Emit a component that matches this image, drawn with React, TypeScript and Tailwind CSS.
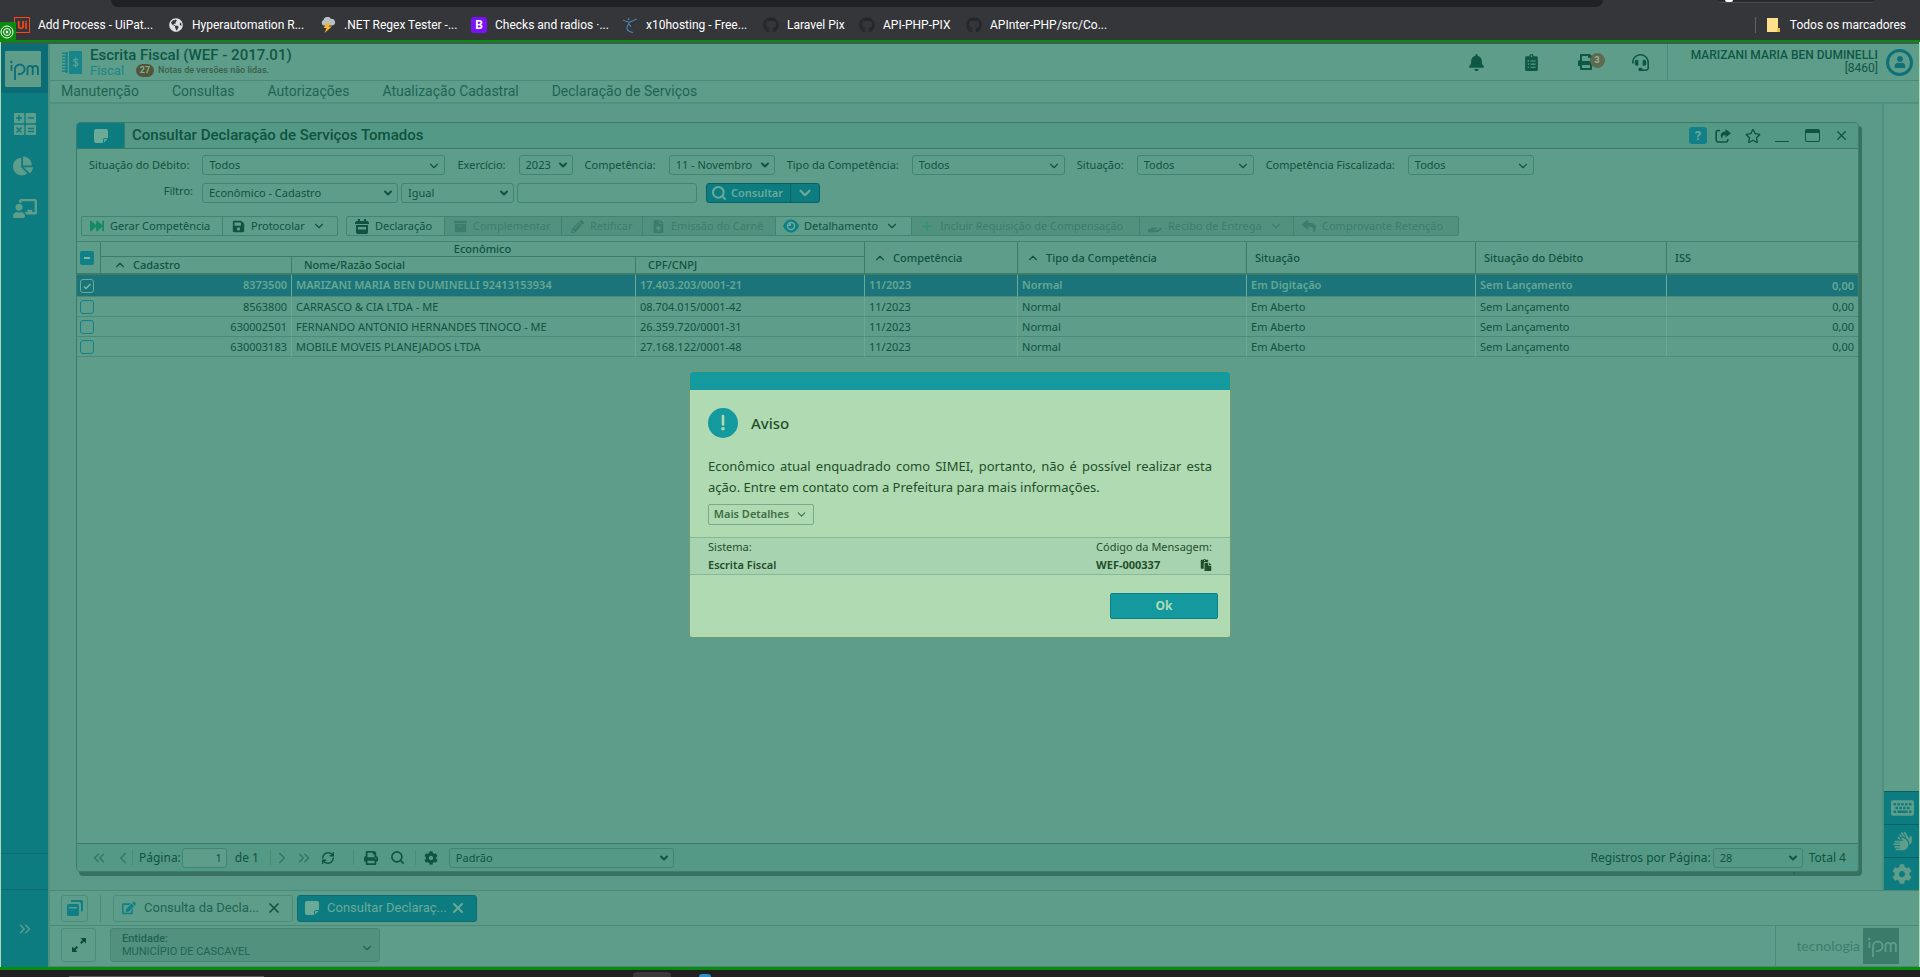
import { useId } from "react";
import type { ReactNode } from "react";
import {
  FaArchive,
  FaBell,
  FaChalkboardTeacher,
  FaChartPie,
  FaClipboardList,
  FaCog,
  FaEdit,
  FaFastForward,
  FaFileUpload,
  FaGithub,
  FaGlobeAmericas,
  FaHandHolding,
  FaHeadset,
  FaKeyboard,
  FaPaste,
  FaPencilAlt,
  FaPlus,
  FaPrint,
  FaRegStar,
  FaReply,
  FaSave,
  FaUser,
} from "react-icons/fa";
import { FaHands } from "react-icons/fa6";
import { ChevronDown, ChevronLeft, ChevronRight, ChevronUp, ChevronsLeft, ChevronsRight, RefreshCw, Search, X } from "lucide-react";

const bookmarks: { label: string; width: string; icon: ReactNode }[] = [
  {
    label: "Add Process - UiPat...",
    width: "w-[154px]",
    icon: (
      <span className="flex size-4 items-center justify-center border border-[#fa4616] font-['Roboto'] text-[11px] leading-none font-bold text-[#fa4616]">
        Ui
      </span>
    ),
  },
  { label: "Hyperautomation R...", width: "w-[152px]", icon: <FaGlobeAmericas className="size-[14px] text-[#dfe1e5]" /> },
  { label: ".NET Regex Tester -...", width: "w-[151px]", icon: <StormIcon /> },
  {
    label: "Checks and radios ·...",
    width: "w-[151px]",
    icon: (
      <span className="flex size-4 items-center justify-center rounded-[3px] bg-[#7a12f5] font-['Roboto'] text-xs leading-none font-bold text-white">
        B
      </span>
    ),
  },
  { label: "x10hosting - Free...", width: "w-[141px]", icon: <RunnerIcon /> },
  { label: "Laravel Pix", width: "w-[96px]", icon: <FaGithub className="size-4 text-[#24282d]" /> },
  { label: "API-PHP-PIX", width: "w-[107px]", icon: <FaGithub className="size-4 text-[#24282d]" /> },
  { label: "APInter-PHP/src/Co...", width: "w-[140px]", icon: <FaGithub className="size-4 text-[#24282d]" /> },
];

const rows = [
  { id: "8373500", name: "MARIZANI MARIA BEN DUMINELLI 92413153934", doc: "17.403.203/0001-21", status: "Em Digitação", selected: true },
  { id: "8563800", name: "CARRASCO & CIA LTDA - ME", doc: "08.704.015/0001-42", status: "Em Aberto", selected: false },
  { id: "630002501", name: "FERNANDO ANTONIO HERNANDES TINOCO - ME", doc: "26.359.720/0001-31", status: "Em Aberto", selected: false },
  { id: "630003183", name: "MOBILE MOVEIS PLANEJADOS LTDA", doc: "27.168.122/0001-48", status: "Em Aberto", selected: false },
];

function StormIcon() {
  return (
    <svg viewBox="0 0 16 16" className="size-4">
      <path d="M3.5 8.5a3 3 0 0 1 0-5.5A4 4 0 0 1 11 2a3.2 3.2 0 0 1 1.500 6.500z" fill="#b9c0c6" />
      <path d="M7 6 3.500 11h3L4.500 16 12 9.500H8.500L11 6z" fill="#f7b52c" />
    </svg>
  );
}

function RunnerIcon() {
  return (
    <svg viewBox="0 0 16 16" className="size-4" fill="none" stroke="#4c7fa6" strokeWidth="1.200">
      <circle cx="6.500" cy="2" r="1" fill="#4c7fa6" stroke="none" />
      <path d="M1 3c2 1 4 2 6 2s5-2 8-3M7 5c0 3-2 3-2 6s3 4 6 4.500M7 7l2 3" />
    </svg>
  );
}

function IpmLogo({ className }: { className: string }) {
  return (
    <svg viewBox="0 0 36 36" className={className} fill="none" stroke="currentColor" strokeWidth="1.800">
      <path d="M6.500 14v6" />
      <circle cx="6.300" cy="11" r="1.200" fill="currentColor" stroke="none" />
      <path d="M10 29V18.300a4.800 4.800 0 1 1 4.800 4.800h-1.800" />
      <path d="M22.500 24v-6.500a2.600 2.600 0 0 1 5.200 0V24M27.700 17.500a2.600 2.600 0 0 1 5.200 0V24" />
    </svg>
  );
}

function CalcIcon() {
  return (
    <svg viewBox="0 0 22 22" className="size-[22px]" fill="#5c9d8b">
      <rect x="0" y="0" width="10.300" height="10.300" rx="1" />
      <rect x="11.700" y="0" width="10.300" height="10.300" rx="1" />
      <rect x="0" y="11.700" width="10.300" height="10.300" rx="1" />
      <rect x="11.700" y="11.700" width="10.300" height="10.300" rx="1" />
      <g stroke="#0d7c80" strokeWidth="1.500">
        <path d="M5 2v6M2 5h6M14 5h6M2.500 14.500l5 5M7.500 14.500l-5 5M14 15.500h6M14 18.500h6" />
      </g>
    </svg>
  );
}

function LedgerIcon() {
  return (
    <svg viewBox="0 0 20 23" className="h-[23px] w-5" fill="#17858a">
      <path d="M3.500 1h2v21h-2zM7 0h13v23H7z" />
      <path d="M0 1.500h6V3H0zM0 4.500h6V6H0zM0 7.500h6V9H0zM0 10.500h6V12H0zM0 13.500h6V15H0zM0 16.500h6V18H0zM0 19.500h6V21H0z" />
      <path d="M16 9c-1-1.300-4.500-1.300-4.500.6s4.500 1.300 4.500 3.500-3.700 2-4.700.6M13.700 6.500v10" fill="none" stroke="#5e9d8a" strokeWidth="1.300" />
    </svg>
  );
}

function NoteIcon() {
  return (
    <svg viewBox="0 0 14 14" className="size-[14px]">
      <path d="M2 0h10a2 2 0 0 1 2 2v7H11a2 2 0 0 0-2 2v3H2a2 2 0 0 1-2-2V2a2 2 0 0 1 2-2z" fill="#6aaa97" />
      <path d="M13.500 10 10 13.500V11a1 1 0 0 1 1-1z" fill="#6aaa97" />
    </svg>
  );
}

function EyeIcon() {
  return (
    <svg viewBox="0 0 16 14" className="h-[14px] w-4">
      <path d="M0 7C2 2.500 5 .5 8 .5S14 2.500 16 7c-2 4.500-5 6.500-8 6.500S2 11.500 0 7z" fill="#0f7f86" />
      <circle cx="8" cy="7" r="4.300" fill="#6aaa97" />
      <circle cx="8" cy="7" r="2.800" fill="#0f7f86" />
      <path d="M8 4.200A2.800 2.800 0 0 0 5.200 7H8z" fill="#6aaa97" />
    </svg>
  );
}

function CalendarIcon() {
  return (
    <svg viewBox="0 0 14 15" className="h-[15px] w-[14px]" fill="currentColor">
      <path d="M3 0h2v2h4V0h2v2h1.500L14 3.500V5H0V3.500L1.500 2H3zM1 6h12v7.500l-1 1.500H2l-1-1.500zm2 2v2.500h8V8z" fillRule="evenodd" />
    </svg>
  );
}

function StackIcon() {
  return (
    <svg viewBox="0 0 16 16" className="size-4" fill="#0f7f86">
      <path d="M4 0h10.500A1.500 1.500 0 0 1 16 1.500V10a1.500 1.500 0 0 1-1.500 1.500H14V4a2 2 0 0 0-2-2H4z" />
      <path d="M1.500 4h9A1.500 1.500 0 0 1 12 5.500v9a1.500 1.500 0 0 1-1.500 1.500h-9A1.500 1.500 0 0 1 0 14.500v-9A1.500 1.500 0 0 1 1.500 4zM2 7v1.500h8V7z" fillRule="evenodd" />
    </svg>
  );
}

function ExpandIcon() {
  return (
    <svg viewBox="0 0 14 14" className="size-[14px]" fill="currentColor">
      <path d="M8.500 0H14v5.500l-2-2-2.500 2.500-1.500-1.500L10.500 2zM5.500 14H0V8.500l2 2 2.500-2.500L6 9.500 3.500 12z" />
    </svg>
  );
}

function ShareIcon() {
  return (
    <svg viewBox="0 0 16 14" className="h-[14px] w-4">
      <path d="M5 1.500H3A1.800 1.800 0 0 0 1.200 3.300v8A1.800 1.800 0 0 0 3 13h8a1.800 1.800 0 0 0 1.800-1.700V10" fill="none" stroke="currentColor" strokeWidth="1.600" />
      <path d="M10.500 0 16 4.300l-5.500 4.200V6C8 6 7 7 7.500 9.800 5 8 4.500 2.800 10.500 2.600z" fill="currentColor" />
    </svg>
  );
}

type FieldProps = { label: string; value: string; width: string; thin?: boolean };

function SelectBox({ id, label, value, width, thin }: FieldProps & { id?: string }) {
  return (
    <span className={`relative block ${width}`}>
      <select
        id={id}
        aria-label={id ? undefined : label}
        className="block h-5 w-full appearance-none rounded-[3px] border border-[#3f8571] bg-transparent pl-1.5 text-[11px] leading-[18px] text-[#0f5340]"
      >
        <option>{value}</option>
      </select>
      <ChevronDown
        strokeWidth={thin ? 2 : 4}
        className={`pointer-events-none absolute top-1 right-1 text-[#0f5340] ${thin ? "size-[14px]" : "size-3"}`}
      />
    </span>
  );
}

function Field({ label, value, width, thin }: FieldProps) {
  const id = useId();
  return (
    <div className="flex items-center gap-[13px]">
      <label htmlFor={id} className="whitespace-nowrap">
        {label}
      </label>
      <SelectBox id={id} label={label} value={value} width={width} thin={thin} />
    </div>
  );
}

function ToolButton({ icon, children, width, disabled, menu, last }: { icon: ReactNode; children: ReactNode; width: string; disabled?: boolean; menu?: boolean; last?: boolean }) {
  return (
    <button
      disabled={disabled}
      className={`flex h-[18px] items-center gap-[5px] whitespace-nowrap pl-[7px] ${width} ${last ? "" : "border-r border-[#3f8571]"} ${
        disabled ? "bg-[#53917f] text-[#3b7d6a]" : "text-[#0f5340]"
      }`}
    >
      <span className="flex w-4 justify-center">{icon}</span>
      {children}
      {menu && <ChevronDown className="ml-0.5 size-[14px]" />}
    </button>
  );
}

function TopBar() {
  return (
    <div className="relative flex h-10 flex-col bg-[#35363a]">
      <div className="flex h-[7px] justify-between pr-[45px] pl-[111px]">
        <div className="h-full w-[1492px] rounded-b-xl bg-[#202124]" />
        <div className="h-[3px] w-[158px] rounded-b-md border-b border-[#4a4b4f] bg-[#292a2d] pl-2">
          <div className="h-0.5 w-2 rounded-b bg-white" />
        </div>
      </div>
      <nav className="flex h-[33px] items-center pt-[3px] pl-[14px] font-['Roboto',sans-serif] text-xs text-white">
        {bookmarks.map((b) => (
          <a key={b.label} href="#" className={`flex items-center gap-2 whitespace-nowrap ${b.width}`}>
            <span className="flex w-4 justify-center">{b.icon}</span>
            {b.label}
          </a>
        ))}
        <a href="#" className="ml-auto flex h-4 items-center gap-2.5 border-l border-[#606165] pr-[14px] pl-[11px] whitespace-nowrap">
          <svg viewBox="0 0 13 14" className="h-[14px] w-[13px]">
            <path d="M0 0h11v10h2v4H0z" fill="#ffe08a" />
            <path d="M10 10h3v4h-3z" fill="#e8bf4a" />
          </svg>
          Todos os marcadores
        </a>
      </nav>
      <div className="absolute top-[22px] left-0 flex h-5 w-4 items-center bg-[#0a8a0f]">
        <svg viewBox="0 0 14 14" className="size-[14px]" fill="none" stroke="white">
          <circle cx="7" cy="7" r="6" />
          <circle cx="7" cy="7" r="3.500" />
          <circle cx="7" cy="7" r="1" fill="white" />
        </svg>
      </div>
    </div>
  );
}

function Sidebar() {
  return (
    <aside className="ml-px flex w-[49px] shrink-0 flex-col border-r-2 border-[#4f9180] bg-[#0d7c80]">
      <div className="flex h-[49px] items-center justify-center bg-[#0b6c76] pr-1">
        <div className="size-9 rounded-[1px] bg-[#5e9d8a] text-[#0b6c76]">
          <IpmLogo className="size-9" />
        </div>
      </div>
      <nav className="flex flex-col items-center pt-5 text-[#5c9d8b]">
        <a href="#" aria-label="Calculadora" className="flex h-[43px] items-start">
          <CalcIcon />
        </a>
        <a href="#" aria-label="Relatórios" className="flex h-[42px] items-start pr-1">
          <FaChartPie className="size-5" />
        </a>
        <a href="#" aria-label="Treinamento" className="flex items-start">
          <FaChalkboardTeacher className="h-[21px] w-6" />
        </a>
      </nav>
      <div className="mt-auto h-[37px] border-y border-[#0b6c76]" />
      <button aria-label="Expandir menu" className="flex h-[77px] items-center justify-center text-[#5c9d8b]">
        <ChevronsRight className="size-[18px]" />
      </button>
    </aside>
  );
}

function Header() {
  return (
    <header className="font-['Roboto',sans-serif]">
      <div className="flex h-[37px] items-stretch border-b border-[#488b79]">
        <div className="flex items-center gap-2 pl-3">
          <LedgerIcon />
          <div>
            <h1 className="text-[15px] leading-[17px] font-medium text-[#0f5745]">Escrita Fiscal (WEF - 2017.01)</h1>
            <div className="flex items-center leading-[13px]">
              <span className="w-[46px] text-[13px] text-[#1b8788]">Fiscal</span>
              <span className="flex h-[13px] w-[18px] items-center justify-center rounded-full bg-[#53543a] text-[9px] font-bold text-[#7fae93]">27</span>
              <span className="pl-1 text-[9px] font-medium text-[#39604a]">Notas de versões não lidas.</span>
            </div>
          </div>
        </div>
        <div className="ml-auto flex items-center gap-[38px] pr-[18px] text-[#0f5745]">
          <button aria-label="Notificações"><FaBell className="size-[17px]" /></button>
          <button aria-label="Tarefas"><FaClipboardList className="size-[17px]" /></button>
          <button aria-label="Impressões" className="relative">
            <FaPrint className="size-4" />
            <span className="absolute -top-px left-3 flex size-[15px] items-center justify-center rounded-full bg-[#5e6a4f] text-[9px] font-bold text-[#8cb89b]">3</span>
          </button>
          <button aria-label="Suporte"><FaHeadset className="size-[17px]" /></button>
        </div>
        <div className="flex items-center gap-2 border-l border-[#488b79] pr-[7px] pl-[23px] text-right">
          <div className="text-xs leading-[13px] text-[#0f5745]">
            <div className="font-medium">MARIZANI MARIA BEN DUMINELLI</div>
            <div>[8460]</div>
          </div>
          <div className="flex size-[27px] items-center justify-center rounded-full border-[3px] border-[#0f7078] text-[#0f7078]">
            <FaUser className="size-3" />
          </div>
        </div>
      </div>
      <nav className="flex h-[23px] items-center gap-[33px] border-b-2 border-[#4f9180] pb-px pl-[11px] text-sm leading-none text-[#1d6552]">
        <a href="#">Manutenção</a>
        <a href="#">Consultas</a>
        <a href="#">Autorizações</a>
        <a href="#">Atualização Cadastral</a>
        <a href="#">Declaração de Serviços</a>
      </nav>
    </header>
  );
}

function Filters() {
  return (
    <div className="flex flex-col gap-2 pt-1.5 text-[11px] text-[#0f5340]">
      <div className="flex gap-3 pl-3">
        <Field label="Situação do Débito:" value="Todos" width="w-[243px]" thin />
        <Field label="Exercício:" value="2023" width="w-[54px]" />
        <Field label="Competência:" value="11 - Novembro" width="w-[106px]" />
        <Field label="Tipo da Competência:" value="Todos" width="w-[153px]" thin />
        <Field label="Situação:" value="Todos" width="w-[117px]" thin />
        <Field label="Competência Fiscalizada:" value="Todos" width="w-[126px]" thin />
      </div>
      <div className="flex items-start gap-[3px]">
        <label htmlFor="filtro" className="mr-1.5 w-[116px] text-right leading-4">
          Filtro:
        </label>
        <SelectBox id="filtro" label="Filtro" value="Econômico - Cadastro" width="w-[196px]" />
        <SelectBox label="Operador" value="Igual" width="w-[113px]" />
        <input aria-label="Valor do filtro" className="h-5 w-[180px] rounded-[3px] border border-[#3f8571] bg-transparent px-1" />
        <div className="ml-1.5 flex h-5 rounded-[3px] border border-[#086068] bg-[#0d7c80] font-semibold text-[#6aaa97]">
          <button className="flex w-[84px] items-center gap-1 border-r border-[#086068] pl-1">
            <Search strokeWidth={3} className="size-4" />
            Consultar
          </button>
          <button aria-label="Mais opções de consulta" className="flex w-7 items-center justify-center">
            <ChevronDown strokeWidth={3} className="size-[18px]" />
          </button>
        </div>
      </div>
    </div>
  );
}

function Toolbar() {
  return (
    <div className="flex gap-2 px-1 pt-[13px] pb-[5px] text-[11px]">
      <div className="flex rounded-[2px] border border-[#3f8571]">
        <ToolButton width="w-[141px]" icon={<FaFastForward className="size-[14px] text-[#128a63]" />}>Gerar Competência</ToolButton>
        <ToolButton width="w-[114px]" menu last icon={<FaSave className="size-[13px]" />}>Protocolar</ToolButton>
      </div>
      <div className="flex rounded-[2px] border border-[#3f8571]">
        <ToolButton width="w-[98px]" icon={<CalendarIcon />}>Declaração</ToolButton>
        <ToolButton width="w-[117px]" disabled icon={<FaArchive className="size-[13px]" />}>Complementar</ToolButton>
        <ToolButton width="w-[81px]" disabled icon={<FaPencilAlt className="size-[13px]" />}>Retificar</ToolButton>
        <ToolButton width="w-[133px]" disabled icon={<FaFileUpload className="size-[13px]" />}>Emissão do Carnê</ToolButton>
        <ToolButton width="w-[136px]" menu icon={<EyeIcon />}>Detalhamento</ToolButton>
        <ToolButton width="w-[228px]" disabled icon={<FaPlus className="size-3 text-[#3a9474]" />}>Incluir Requisição de Compensação</ToolButton>
        <ToolButton width="w-[154px]" disabled menu icon={<FaHandHolding className="size-[14px]" />}>Recibo de Entrega</ToolButton>
        <ToolButton width="w-[164px]" disabled last icon={<FaReply className="size-[14px]" />}>Comprovante Retenção</ToolButton>
      </div>
    </div>
  );
}

const boxClass =
  "block size-[14px] appearance-none rounded-[3px] border border-[#128088] checked:border-[#6aaa97]";

function Grid() {
  const head = "border-r border-b-2 border-[#3b7d69] text-left font-medium";
  return (
    <table className="w-full table-fixed border-separate border-spacing-0 border-t border-[#3f8571] text-[11px] text-[#0f5340]">
      <colgroup>
        <col className="w-6" />
        <col className="w-[191px]" />
        <col className="w-[344px]" />
        <col className="w-[229px]" />
        <col className="w-[153px]" />
        <col className="w-[229px]" />
        <col className="w-[229px]" />
        <col className="w-[191px]" />
        <col />
      </colgroup>
      <thead>
        <tr className="h-[15px] leading-[14px]">
          <th rowSpan={2} className={`${head} pl-[3px]`}>
            <button aria-label="Desmarcar todos" className="flex size-[14px] items-center justify-center rounded-[2px] bg-[#128088]">
              <span className="h-0.5 w-1.5 bg-[#7fb8a0]" />
            </button>
          </th>
          <th colSpan={3} className="border-r border-b border-[#3b7d69] text-center font-medium">Econômico</th>
          <th rowSpan={2} className={`${head} pl-2`}>
            <span className="flex items-center gap-1.5"><ChevronUp className="size-[14px]" />Competência</span>
          </th>
          <th rowSpan={2} className={`${head} pl-2`}>
            <span className="flex items-center gap-1.5"><ChevronUp className="size-[14px]" />Tipo da Competência</span>
          </th>
          <th rowSpan={2} className={`${head} pl-2`}>Situação</th>
          <th rowSpan={2} className={`${head} pl-2`}>Situação do Débito</th>
          <th rowSpan={2} className="border-b-2 border-[#3b7d69] pl-2 text-left font-medium">ISS</th>
        </tr>
        <tr className="h-[18px] leading-4">
          <th className={`${head} pl-3`}>
            <span className="flex items-center gap-1.5"><ChevronUp className="size-[14px]" />Cadastro</span>
          </th>
          <th className={`${head} pl-3`}>Nome/Razão Social</th>
          <th className={`${head} pl-3`}>CPF/CNPJ</th>
        </tr>
      </thead>
      <tbody>
        {rows.map((r) => {
          const cell = r.selected ? "border-b border-r border-r-[#6aaa97] border-b-[#4a8a77] px-1" : "border-b border-r border-r-[#6aa795] border-b-[#4a8a77] px-1 pt-px";
          return (
            <tr key={r.id} className={r.selected ? "h-[22px] bg-[#1b747a] font-semibold text-[#67a793]" : "h-5"}>
              <td className="border-b border-[#4a8a77] pl-[3px] leading-none">
                <span className="relative block size-[14px]">
                  <input type="checkbox" aria-label={`Selecionar ${r.name}`} defaultChecked={r.selected} className={boxClass} />
                  {r.selected && (
                    <svg viewBox="0 0 14 14" className="pointer-events-none absolute inset-0 size-[14px]" fill="none" stroke="#7fb8a0" strokeWidth="1.500">
                      <path d="M4 7.500 6 9.500 10.500 5" />
                    </svg>
                  )}
                </span>
              </td>
              <td className={`${cell} text-right`}>{r.id}</td>
              <td className={cell}>{r.name}</td>
              <td className={cell}>{r.doc}</td>
              <td className={cell}>11/2023</td>
              <td className={cell}>Normal</td>
              <td className={cell}>{r.status}</td>
              <td className={cell}>Sem Lançamento</td>
              <td className="border-b border-[#4a8a77] px-1 pt-px text-right">0,00</td>
            </tr>
          );
        })}
      </tbody>
    </table>
  );
}

function Pager() {
  return (
    <footer className="relative flex h-7 shrink-0 items-center rounded-b-[3px] border-t border-[#3b7d69] bg-[#549985] pr-3 pl-[13px] text-xs text-[#0f5340]">
      <div className="flex items-center gap-1.5 text-[#2f7a65]">
        <button aria-label="Primeira página"><ChevronsLeft className="size-[18px]" /></button>
        <button aria-label="Página anterior"><ChevronLeft className="size-[18px]" /></button>
      </div>
      <label htmlFor="pagina" className="border-l border-[#488b79] pl-1.5 leading-4">Página:</label>
      <input id="pagina" defaultValue="1" className="ml-px h-5 w-[45px] rounded-[3px] border border-[#3f8571] bg-[#5e9d8a] pr-1 text-right text-[11px]" />
      <span className="w-11 border-r border-[#488b79] pl-2 leading-4">de 1</span>
      <div className="flex items-center gap-1 pl-0.5 text-[#2f7a65]">
        <button aria-label="Próxima página"><ChevronRight className="size-[18px]" /></button>
        <button aria-label="Última página"><ChevronsRight className="size-[18px]" /></button>
      </div>
      <button aria-label="Atualizar" className="pl-2"><RefreshCw strokeWidth={2.5} className="size-[14px]" /></button>
      <div className="ml-[18px] flex items-center gap-3 border-x border-[#488b79] px-2.5">
        <button aria-label="Imprimir"><FaPrint className="size-[14px]" /></button>
        <button aria-label="Pesquisar"><Search strokeWidth={2.5} className="size-[15px]" /></button>
      </div>
      <button aria-label="Configurar" className="pr-[11px] pl-2"><FaCog className="size-[14px]" /></button>
      <SelectBox label="Visão" value="Padrão" width="w-[225px]" />
      <div className="ml-auto flex items-center">
        <label htmlFor="registros" className="pr-0.5">Registros por Página:</label>
        <SelectBox id="registros" label="Registros por Página" value="28" width="w-[90px]" />
        <span className="pl-1.5">Total 4</span>
      </div>
      <svg viewBox="0 0 12 12" className="absolute right-px bottom-px size-3" fill="#4a9c95">
        <path d="M8 1h2v2H8zM4 4.500h2v2H4zM8 4.500h2v2H8zM0 8h2v2H0zM4 8h2v2H4zM8 8h2v2H8z" />
      </svg>
    </footer>
  );
}

function FiscalWindow() {
  return (
    <section className="relative flex flex-1 flex-col rounded-[4px] border border-[#3b7d69] bg-[#5e9d8a] font-['Noto_Sans',sans-serif] shadow-[3px_4px_0_0_rgba(32,88,70,0.6)]">
      <div className="flex h-[26px] shrink-0 items-stretch rounded-t-[3px] border-b border-[#3b7d69] bg-[#549985] font-['Roboto',sans-serif] text-[#0f5340]">
        <div className="flex w-12 items-center justify-center rounded-tl-[3px] border-r border-[#3b7d69] bg-[#0d7c80]">
          <NoteIcon />
        </div>
        <h2 className="pl-[7px] text-[15px] leading-[25px] font-medium">Consultar Declaração de Serviços Tomados</h2>
        <div className="ml-auto flex items-center pr-[9px]">
          <button aria-label="Ajuda" className="mr-2 flex h-[17px] w-[18px] items-center justify-center rounded-[3px] bg-[#128088] text-[13px] font-bold text-[#6aaa97]">?</button>
          <button aria-label="Compartilhar" className="mr-[14px]"><ShareIcon /></button>
          <button aria-label="Favoritar" className="mr-[14px]"><FaRegStar className="size-4" /></button>
          <button aria-label="Minimizar" className="mr-4 h-3 w-[14px] border-b border-current" />
          <button aria-label="Restaurar" className="mr-[14px] h-[13px] w-[15px] rounded-[2px] border border-t-4 border-current" />
          <button aria-label="Fechar"><X className="size-[15px]" /></button>
        </div>
      </div>
      <Filters />
      <Toolbar />
      <div className="flex-1">
        <Grid />
      </div>
      <Pager />
    </section>
  );
}

function Taskbar() {
  return (
    <footer className="font-['Roboto',sans-serif] text-[#1d6552]">
      <div className="flex h-9 items-center border-y border-[#488b79] pl-[11px]">
        <button aria-label="Janelas" className="flex size-[27px] items-center justify-center rounded-[3px] border border-[#4a8d79]">
          <StackIcon />
        </button>
        <span className="mx-3 h-[27px] w-px bg-[#488b79]" />
        <div className="flex gap-1">
          <div className="flex h-[27px] w-[180px] items-center rounded-[3px] border border-[#4a8d79] pl-2">
            <FaEdit className="size-[14px] text-[#0f7f86]" />
            <a href="#" className="pl-2 text-[13px]">Consulta da Decla...</a>
            <button aria-label="Fechar Consulta da Declaração" className="mr-2.5 ml-auto text-[#0f5340]"><X strokeWidth={2.5} className="size-4" /></button>
          </div>
          <div className="flex h-[27px] w-[180px] items-center rounded-[3px] border border-[#0b6c76] bg-[#0d7c80] pl-[7px] text-[#6aaa97]">
            <NoteIcon />
            <a href="#" className="pl-2 text-[13px]">Consultar Declaraç...</a>
            <button aria-label="Fechar Consultar Declaração" className="mr-2.5 ml-auto"><X strokeWidth={3} className="size-4" /></button>
          </div>
        </div>
      </div>
      <div className="flex h-[41px] items-stretch border-b border-[#488b79] pl-[11px]">
        <button aria-label="Tela cheia" className="mt-[2px] mb-1 flex w-[35px] items-center justify-center rounded-[3px] border border-[#4a8d79] text-[#0f4a3a]">
          <ExpandIcon />
        </button>
        <button className="mt-[2px] mb-1 ml-[14px] flex w-[270px] items-center justify-between rounded-[3px] border border-[#4a8572] bg-[#52917e] pr-[5px] pl-[11px] text-left text-[11px] leading-[13px]">
          <span>
            <b className="block font-medium">Entidade:</b>
            MUNICÍPIO DE CASCAVEL
          </span>
          <ChevronDown className="mt-1.5 size-[14px]" />
        </button>
        <div className="ml-auto flex items-center gap-[3px] border-l border-[#488b79] pr-[21px] pl-5 font-['Lato',sans-serif] text-sm text-[#3d7f6c]">
          tecnologia
          <div className="size-9 rounded-[1px] bg-[#3a7c69] text-[#5e9d8a]">
            <IpmLogo className="size-9" />
          </div>
        </div>
      </div>
    </footer>
  );
}

function SideTools() {
  const item = "flex h-[33px] items-center justify-center border-t border-[#086068] bg-[#0d7c80] text-[#5e9d8a]";
  return (
    <aside className="flex w-[38px] shrink-0 flex-col justify-end border-l-2 border-[#4f9180]">
      <button aria-label="Teclado" className={item}><FaKeyboard className="h-6 w-[23px]" /></button>
      <button aria-label="Libras" className={item}><FaHands className="h-[22px] w-[21px]" /></button>
      <button aria-label="Configurações" className={item}><FaCog className="size-5" /></button>
    </aside>
  );
}

function Notice() {
  return (
    <div
      role="dialog"
      aria-labelledby="aviso"
      className="w-[542px] overflow-hidden rounded-[3px] border border-[#6f9a72] bg-[#b0dab2] font-['Noto_Sans',sans-serif] text-[#1f4f2a]"
    >
      <div className="h-[18px] bg-[#14999e]" />
      <div className="px-[18px] pt-[18px]">
        <div className="flex items-center gap-[13px]">
          <svg viewBox="0 0 30 30" className="size-[30px]">
            <circle cx="15" cy="15" r="15" fill="#14999e" />
            <path d="M15 8v8.500" stroke="#b0dab2" strokeWidth="2.600" strokeLinecap="round" />
            <circle cx="15" cy="20.800" r="1.800" fill="#b0dab2" />
          </svg>
          <h3 id="aviso" className="text-[15px] font-medium">Aviso</h3>
        </div>
        <p className="pt-[18px] text-justify text-[13px] leading-[21px]">
          Econômico atual enquadrado como SIMEI, portanto, não é possível realizar esta ação. Entre em contato com a Prefeitura para mais informações.
        </p>
        <button className="mt-1.5 flex h-[21px] w-[106px] items-center justify-center gap-1.5 rounded-[2px] border border-[#7aa98e] text-[11px] font-semibold whitespace-nowrap text-[#3e6e47]">
          Mais Detalhes
          <ChevronDown className="size-[13px]" />
        </button>
      </div>
      <div className="mt-3 flex justify-between border-y border-[#8ab894] bg-[#a8d3b0] px-[18px] text-[11px] leading-[18px]">
        <div>
          Sistema:
          <div className="font-semibold">Escrita Fiscal</div>
        </div>
        <div>
          Código da Mensagem:
          <div className="flex items-center justify-between font-bold">
            WEF-000337
            <button aria-label="Copiar código"><FaPaste className="size-3" /></button>
          </div>
        </div>
      </div>
      <div className="flex justify-end px-3 pt-[18px] pb-[18px]">
        <button className="h-[26px] w-[108px] rounded-[2px] border border-[#0f7f8c] bg-[#14999e] text-xs font-bold text-[#b0dab2]">Ok</button>
      </div>
    </div>
  );
}

export default function App() {
  return (
    <div className="flex min-h-screen flex-col bg-[#202020]">
      <TopBar />
      <div className="relative flex flex-1 border-t-2 border-b-[3px] border-[#0a8a0f] bg-[#5e9d8a]">
        <span className="absolute inset-y-0 left-0 w-px bg-[#b0dab2]" />
        <span className="absolute inset-y-0 right-0 w-px bg-[#b0dab2]" />
        <div className="flex flex-1 border-t-2 border-[#35604a]">
          <Sidebar />
          <div className="flex flex-1 flex-col">
            <Header />
            <div className="flex flex-1">
              <main className="relative flex flex-1 bg-[#5b9a89] pt-[18px] pr-[23px] pb-[18px] pl-[26px]">
                <span className="absolute right-[66px] bottom-[14px] font-['Noto_Sans',sans-serif] text-xs leading-4 font-semibold text-[#3f7565]">Servidor: ntp.br</span>
                <FiscalWindow />
              </main>
              <SideTools />
            </div>
            <Taskbar />
          </div>
        </div>
        <div className="absolute inset-0 flex items-center justify-center">
          <Notice />
        </div>
      </div>
      <div className="flex h-[7px] items-end bg-[#202020]">
        <span className="ml-[69px] h-px w-[195px] bg-[#5a5a5a]" />
        <span className="ml-[369px] h-[5px] w-[38px] rounded-t bg-[#3a3a3a]" />
        <span className="ml-7 h-[3px] w-3 rounded-t-full bg-[#2d8fc4]" />
      </div>
    </div>
  );
}
